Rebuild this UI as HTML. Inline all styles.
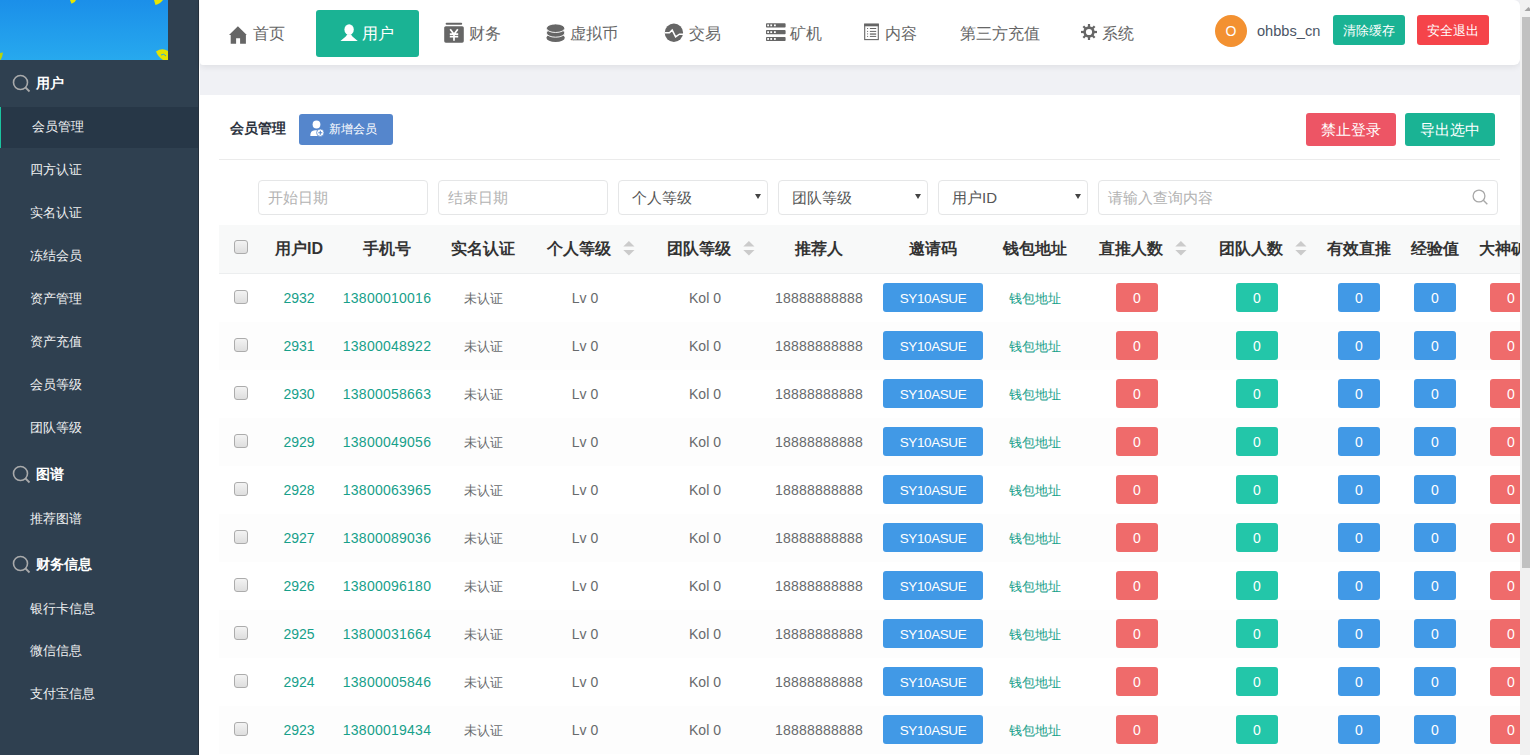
<!DOCTYPE html><html><head><meta charset="utf-8"><style>
*{box-sizing:border-box;margin:0;padding:0}
html,body{width:1530px;height:755px;overflow:hidden;background:#fff;font-family:"Liberation Sans",sans-serif;}
#side{position:absolute;left:0;top:0;width:199px;height:755px;background:#2f4050;}
#sideline{position:absolute;left:198px;top:0;width:1px;height:755px;background:#26313d}
#logo{position:absolute;left:0;top:0;width:168px;height:60px;background:linear-gradient(#1b8fe9,#27a9ee);overflow:hidden}
.sec{position:absolute;left:0;width:198px;height:20px;color:#fff;font-weight:bold;font-size:14px;line-height:20px}
.sec svg{position:absolute;left:12px;top:1px}
.sec span{position:absolute;left:36px;top:0}
.item{position:absolute;left:30px;color:#f0f1f2;font-size:13px;line-height:16px;white-space:nowrap}
#act{position:absolute;left:0;top:107px;width:198px;height:41px;background:#273747;border-left:1px solid #1bc4a0}
#gray{position:absolute;left:200px;top:0;width:1320px;height:95px;background:#f0f1f5}
#hdr{position:absolute;left:200px;top:0;width:1320px;height:65px;background:#fff;border-radius:0 6px 6px 3px;box-shadow:0 2px 6px rgba(0,0,0,.075)}
.nt{position:absolute;top:24px;color:#666;font-size:16px;line-height:20px;white-space:nowrap}
.ic{position:absolute}
#card{position:absolute;left:200px;top:95px;width:1320px;height:660px;background:#fff;overflow:hidden}
.btn{position:absolute;color:#fff;text-align:center;border-radius:3px;white-space:nowrap}
.inp{position:absolute;top:85px;height:35px;border:1px solid #e5e6e7;border-radius:4px;font-size:15px;line-height:33px;padding-left:9px;color:#b3b3b3;white-space:nowrap}
.sel{color:#555;padding-left:13px}
.arr{position:absolute;right:6px;top:13px}
#sb{position:absolute;left:1520px;top:0;width:10px;height:755px;background:#f1f1f1}
#thumb{position:absolute;left:1522px;top:17px;width:8px;height:551px;background:#c1c1c1}
.th{position:absolute;top:0;height:48px;line-height:48px;font-weight:bold;font-size:16px;color:#333;white-space:nowrap;text-align:center}
.td{position:absolute;height:48px;line-height:48px;font-size:14px;color:#676a6c;white-space:nowrap;text-align:center}
.g{color:#17a08a}
.bdg{display:inline-block;vertical-align:middle;height:29px;line-height:31px;color:#fff;border-radius:3px;font-size:14px;margin-top:-4px}
.cb{display:inline-block;vertical-align:middle;width:14px;height:14px;border:1px solid #acacac;border-radius:3px;background:linear-gradient(#f3f3f3,#dedede);margin-top:-5px;margin-left:-1px}
</style></head><body>
<div id="side"></div><div id="sideline"></div><div id="logo"><svg width="168" height="60" viewBox="0 0 168 60" style="position:absolute;left:0;top:0"><path d="M70 0 L76 0 Q75 3 71.5 3.8 Z" fill="#e8e600"/><path d="M154 0 L163 0 Q160 4 155.5 5 Z" fill="#e8e600"/><path d="M0 53 L3 52.5 Q2.5 57 0.5 60 L0 60 Z" fill="#b6d40a"/><path d="M156 51.5 Q162 47.5 168 51 L168 60 L163 60 Q158 57 156 51.5 Z" fill="#e3e400"/><path d="M161 55 Q164 53 166 56" stroke="#26a5ec" stroke-width="1" fill="none"/></svg></div>
<div id="act"></div>
<div class="sec" style="top:73px"><svg width="20" height="20" viewBox="0 0 20 20"><circle cx="8.5" cy="8.5" r="7" fill="none" stroke="#a9aaab" stroke-width="1.6"/><path d="M13.5 13.5L17.5 17.5" stroke="#a9aaab" stroke-width="1.8"/></svg><span>用户</span></div>
<div class="sec" style="top:464px"><svg width="20" height="20" viewBox="0 0 20 20"><circle cx="8.5" cy="8.5" r="7" fill="none" stroke="#a9aaab" stroke-width="1.6"/><path d="M13.5 13.5L17.5 17.5" stroke="#a9aaab" stroke-width="1.8"/></svg><span>图谱</span></div>
<div class="sec" style="top:554px"><svg width="20" height="20" viewBox="0 0 20 20"><circle cx="8.5" cy="8.5" r="7" fill="none" stroke="#a9aaab" stroke-width="1.6"/><path d="M13.5 13.5L17.5 17.5" stroke="#a9aaab" stroke-width="1.8"/></svg><span>财务信息</span></div>
<div class="item" style="top:119px;left:32px">会员管理</div>
<div class="item" style="top:162px;left:30px">四方认证</div>
<div class="item" style="top:205px;left:30px">实名认证</div>
<div class="item" style="top:248px;left:30px">冻结会员</div>
<div class="item" style="top:291px;left:30px">资产管理</div>
<div class="item" style="top:334px;left:30px">资产充值</div>
<div class="item" style="top:377px;left:30px">会员等级</div>
<div class="item" style="top:420px;left:30px">团队等级</div>
<div class="item" style="top:511px;left:30px">推荐图谱</div>
<div class="item" style="top:601px;left:30px">银行卡信息</div>
<div class="item" style="top:643px;left:30px">微信信息</div>
<div class="item" style="top:686px;left:30px">支付宝信息</div>
<div id="gray"></div><div id="hdr"></div>
<div class="btn" style="left:316px;top:10px;width:103px;height:47px;background:#1ab394;border-radius:3px"></div>
<div class="nt" style="left:253px;color:#666">首页</div>
<div class="nt" style="left:362px;color:#fff">用户</div>
<div class="nt" style="left:469px;color:#666">财务</div>
<div class="nt" style="left:570px;color:#666">虚拟币</div>
<div class="nt" style="left:689px;color:#666">交易</div>
<div class="nt" style="left:790px;color:#666">矿机</div>
<div class="nt" style="left:885px;color:#666">内容</div>
<div class="nt" style="left:960px;color:#666">第三方充值</div>
<div class="nt" style="left:1102px;color:#666">系统</div>
<svg style="position:absolute;left:229px;top:26px" width="18" height="18" viewBox="0 0 18 18"><path d="M8.9 0.2 L17.8 8.9 L16.9 8.9 L16.9 17.8 L11.1 17.8 L11.1 12.2 L7.1 12.2 L7.1 17.8 L1.7 17.8 L1.7 8.9 L0 8.9 Z" fill="#666"/></svg>
<svg style="position:absolute;left:340px;top:24px" width="18" height="18" viewBox="0 0 18 18"><ellipse cx="9.1" cy="5.5" rx="4.7" ry="5.3" fill="#fff"/><path d="M0.4 16.9 L4.6 13.4 Q6.6 12 7.1 10.2 H11.1 Q11.6 12 13.6 13.4 L17.8 16.9 Z" fill="#fff"/></svg>
<svg style="position:absolute;left:444px;top:22px" width="20" height="21" viewBox="0 0 20 21"><rect x="1.6" y="0.8" width="16.6" height="2" rx="1" fill="#666"/><rect x="0.2" y="4.2" width="19.6" height="16.5" rx="1.6" fill="#666"/><path d="M6.2 7.3 L10 12.3 L13.8 7.3 M5.8 12.2 H14.2 M5.8 14.6 H14.2 M10 12.3 V18.8" stroke="#fff" stroke-width="1.7" fill="none"/></svg>
<svg style="position:absolute;left:546px;top:23px" width="20" height="20" viewBox="0 0 20 20"><ellipse cx="9.6" cy="14.7" rx="9.2" ry="4.3" fill="#666"/><ellipse cx="9.6" cy="9.9" rx="9.2" ry="4.3" fill="#666" stroke="#fff" stroke-width="0.9"/><ellipse cx="9.6" cy="5.2" rx="9.2" ry="4.3" fill="#666" stroke="#fff" stroke-width="0.9"/></svg>
<svg style="position:absolute;left:664px;top:23px" width="20" height="20" viewBox="0 0 20 20"><circle cx="9.9" cy="9.8" r="9.2" fill="#666"/><path d="M0.5 9.8 H5.4 L8.2 7.1 L11.6 13.8 L15.4 11.2 H19.5" stroke="#fff" stroke-width="1.5" fill="none" stroke-linejoin="miter"/></svg>
<svg style="position:absolute;left:766px;top:23px" width="20" height="18" viewBox="0 0 20 18"><rect x="0" y="0.2" width="19.6" height="4.3" rx="0.8" fill="#666"/><rect x="0" y="7.1" width="19.6" height="4.1" rx="0.8" fill="#666"/><rect x="0" y="13.9" width="19.6" height="4.1" rx="0.8" fill="#666"/><rect x="1.2000000000000002" y="1.4500000000000002" width="1.8" height="1.8" fill="#fff"/><rect x="4.3" y="1.4500000000000002" width="1.8" height="1.8" fill="#fff"/><rect x="8.0" y="1.4500000000000002" width="1.8" height="1.8" fill="#fff"/><rect x="1.2000000000000002" y="8.25" width="1.8" height="1.8" fill="#fff"/><rect x="4.3" y="8.25" width="1.8" height="1.8" fill="#fff"/><rect x="8.0" y="8.25" width="1.8" height="1.8" fill="#fff"/><rect x="1.2000000000000002" y="15.049999999999999" width="1.8" height="1.8" fill="#fff"/><rect x="4.3" y="15.049999999999999" width="1.8" height="1.8" fill="#fff"/><rect x="8.0" y="15.049999999999999" width="1.8" height="1.8" fill="#fff"/></svg>
<svg style="position:absolute;left:864px;top:23px" width="16" height="18" viewBox="0 0 16 18"><rect x="0.7" y="1.2" width="13.6" height="15.4" fill="none" stroke="#666" stroke-width="1.1"/><rect x="0.2" y="0.7" width="14.6" height="2.6" fill="#666"/><rect x="3.1" y="5.0" width="1" height="1" fill="#666"/><rect x="5.9" y="5.0" width="6.3" height="1" fill="#666"/><rect x="3.1" y="7.9" width="1" height="1" fill="#666"/><rect x="5.9" y="7.9" width="6.3" height="1" fill="#666"/><rect x="3.1" y="10.4" width="1" height="1" fill="#666"/><rect x="5.9" y="10.4" width="6.3" height="1.3" fill="#666"/><rect x="3.1" y="12.9" width="1" height="1" fill="#666"/><rect x="5.9" y="12.9" width="6.3" height="1" fill="#666"/></svg>
<svg style="position:absolute;left:1081px;top:24px" width="16" height="16" viewBox="0 0 16 16"><circle cx="8" cy="8" r="5.7" fill="#666"/><rect x="6.9" y="0" width="2.2" height="16" fill="#666" transform="rotate(0 8 8)"/><rect x="6.9" y="0" width="2.2" height="16" fill="#666" transform="rotate(45 8 8)"/><rect x="6.9" y="0" width="2.2" height="16" fill="#666" transform="rotate(90 8 8)"/><rect x="6.9" y="0" width="2.2" height="16" fill="#666" transform="rotate(135 8 8)"/><circle cx="8" cy="8" r="3.1" fill="#fff"/></svg>
<div class="abs" style="position:absolute;left:1215px;top:15px;width:32px;height:32px;border-radius:50%;background:#f39131;color:#fff;font-size:14px;line-height:32px;text-align:center">O</div>
<div style="position:absolute;left:1257px;top:21px;font-size:14.6px;line-height:20px;color:#4b5565">ohbbs_cn</div>
<div class="btn" style="left:1333px;top:15px;width:72px;height:30px;line-height:31px;font-size:13px;background:#1ab394">清除缓存</div>
<div class="btn" style="left:1417px;top:15px;width:72px;height:30px;line-height:31px;font-size:13px;background:#f5444a">安全退出</div>
<div id="card">
<div style="position:absolute;left:30px;top:24px;font-size:14px;font-weight:bold;color:#2d3440;line-height:18px">会员管理</div>
<div class="btn" style="left:99px;top:19px;width:94px;height:31px;line-height:31px;font-size:12px;background:#5586cc;padding-left:14px">新增会员</div>
<svg style="position:absolute;left:109px;top:25px" width="16" height="18" viewBox="0 0 16 18"><circle cx="7.5" cy="4.5" r="3.9" fill="#fff"/><path d="M1.3 16 Q1 10.5 6 10.2 L8.5 10.2 Q9.5 10.5 9 12 L9 16 Z" fill="#fff"/><circle cx="11.3" cy="12.7" r="3.7" fill="#fff" stroke="#5586cc" stroke-width="0.8"/><path d="M9.3 12.7 H13.3 M11.3 10.7 V14.7" stroke="#5586cc" stroke-width="1.1"/></svg>
<div class="btn" style="left:1106px;top:18px;width:90px;height:33px;line-height:34px;font-size:15px;background:#ed5565">禁止登录</div>
<div class="btn" style="left:1205px;top:18px;width:90px;height:33px;line-height:34px;font-size:15px;background:#1ab394">导出选中</div>
<div style="position:absolute;left:19px;top:64px;width:1281px;height:1px;background:#ebebeb"></div>
<div class="inp" style="left:58px;width:170px">开始日期</div>
<div class="inp" style="left:238px;width:170px">结束日期</div>
<div class="inp sel" style="left:418px;width:150px">个人等级<svg class="arr" width="6" height="5" viewBox="0 0 6 5"><path d="M0 0 H6 L3 5 Z" fill="#444"/></svg></div>
<div class="inp sel" style="left:578px;width:150px">团队等级<svg class="arr" width="6" height="5" viewBox="0 0 6 5"><path d="M0 0 H6 L3 5 Z" fill="#444"/></svg></div>
<div class="inp sel" style="left:738px;width:150px">用户ID<svg class="arr" width="6" height="5" viewBox="0 0 6 5"><path d="M0 0 H6 L3 5 Z" fill="#444"/></svg></div>
<div class="inp" style="left:898px;width:400px">请输入查询内容<svg style="position:absolute;left:373px;top:8px" width="17" height="17" viewBox="0 0 17 17"><circle cx="7" cy="7" r="5.9" fill="none" stroke="#a8a8a8" stroke-width="1.3"/><path d="M11.3 11.3 L15.3 15.3" stroke="#a8a8a8" stroke-width="1.4"/></svg></div>
<div style="position:absolute;left:19px;top:130px;width:1310px;height:49px;background:#f8f9f9;border-bottom:1px solid #eceeef"></div>
<div class="th" style="top:130px;left:19px;width:44px"><span class="cb"></span></div>
<div class="th" style="top:130px;left:63px;width:72px">用户ID</div>
<div class="th" style="top:130px;left:135px;width:104px">手机号</div>
<div class="th" style="top:130px;left:239px;width:88px">实名认证</div>
<div class="th" style="top:130px;left:327px;width:116px;padding-left:12px">个人等级<svg style="display:inline-block;vertical-align:top;margin-top:16px;margin-left:12px" width="12" height="15" viewBox="0 0 12 15"><path d="M0.3 5.6 L5.9 0.1 L11.5 5.6 Z M0.3 9 L11.5 9 L5.9 14.6 Z" fill="#cbcbcb"/></svg></div>
<div class="th" style="top:130px;left:443px;width:124px;padding-left:12px">团队等级<svg style="display:inline-block;vertical-align:top;margin-top:16px;margin-left:12px" width="12" height="15" viewBox="0 0 12 15"><path d="M0.3 5.6 L5.9 0.1 L11.5 5.6 Z M0.3 9 L11.5 9 L5.9 14.6 Z" fill="#cbcbcb"/></svg></div>
<div class="th" style="top:130px;left:567px;width:104px">推荐人</div>
<div class="th" style="top:130px;left:671px;width:124px">邀请码</div>
<div class="th" style="top:130px;left:795px;width:80px">钱包地址</div>
<div class="th" style="top:130px;left:875px;width:124px;padding-left:12px">直推人数<svg style="display:inline-block;vertical-align:top;margin-top:16px;margin-left:12px" width="12" height="15" viewBox="0 0 12 15"><path d="M0.3 5.6 L5.9 0.1 L11.5 5.6 Z M0.3 9 L11.5 9 L5.9 14.6 Z" fill="#cbcbcb"/></svg></div>
<div class="th" style="top:130px;left:999px;width:116px;padding-left:12px">团队人数<svg style="display:inline-block;vertical-align:top;margin-top:16px;margin-left:12px" width="12" height="15" viewBox="0 0 12 15"><path d="M0.3 5.6 L5.9 0.1 L11.5 5.6 Z M0.3 9 L11.5 9 L5.9 14.6 Z" fill="#cbcbcb"/></svg></div>
<div class="th" style="top:130px;left:1115px;width:88px">有效直推</div>
<div class="th" style="top:130px;left:1203px;width:64px">经验值</div>
<div class="th" style="top:130px;left:1267px;width:88px">大神矿机</div>
<div class="td" style="top:179px;left:19px;width:44px"><span class="cb"></span></div>
<div class="td" style="top:179px;left:63px;width:72px"><span class="g">2932</span></div>
<div class="td" style="top:179px;left:135px;width:104px"><span class="g" style="letter-spacing:0.25px">13800010016</span></div>
<div class="td" style="top:179px;left:239px;width:88px"><span style="font-size:13px">未认证</span></div>
<div class="td" style="top:179px;left:327px;width:116px">Lv 0</div>
<div class="td" style="top:179px;left:443px;width:124px">Kol 0</div>
<div class="td" style="top:179px;left:567px;width:104px"><span style="letter-spacing:0.2px">18888888888</span></div>
<div class="td" style="top:179px;left:671px;width:124px"><span class="bdg" style="width:100px;background:#4199e6;font-size:13.5px;letter-spacing:-0.4px">SY10ASUE</span></div>
<div class="td" style="top:179px;left:795px;width:80px"><span class="g" style="font-size:13px">钱包地址</span></div>
<div class="td" style="top:179px;left:875px;width:124px"><span class="bdg" style="width:42px;background:#ef6b6b">0</span></div>
<div class="td" style="top:179px;left:999px;width:116px"><span class="bdg" style="width:42px;background:#23c6a9">0</span></div>
<div class="td" style="top:179px;left:1115px;width:88px"><span class="bdg" style="width:42px;background:#4199e6">0</span></div>
<div class="td" style="top:179px;left:1203px;width:64px"><span class="bdg" style="width:42px;background:#4199e6">0</span></div>
<div class="td" style="top:179px;left:1267px;width:88px"><span class="bdg" style="width:42px;background:#ef6b6b">0</span></div>
<div style="position:absolute;left:19px;top:227px;width:1310px;height:48px;background:#fdfdfd"></div>
<div class="td" style="top:227px;left:19px;width:44px"><span class="cb"></span></div>
<div class="td" style="top:227px;left:63px;width:72px"><span class="g">2931</span></div>
<div class="td" style="top:227px;left:135px;width:104px"><span class="g" style="letter-spacing:0.25px">13800048922</span></div>
<div class="td" style="top:227px;left:239px;width:88px"><span style="font-size:13px">未认证</span></div>
<div class="td" style="top:227px;left:327px;width:116px">Lv 0</div>
<div class="td" style="top:227px;left:443px;width:124px">Kol 0</div>
<div class="td" style="top:227px;left:567px;width:104px"><span style="letter-spacing:0.2px">18888888888</span></div>
<div class="td" style="top:227px;left:671px;width:124px"><span class="bdg" style="width:100px;background:#4199e6;font-size:13.5px;letter-spacing:-0.4px">SY10ASUE</span></div>
<div class="td" style="top:227px;left:795px;width:80px"><span class="g" style="font-size:13px">钱包地址</span></div>
<div class="td" style="top:227px;left:875px;width:124px"><span class="bdg" style="width:42px;background:#ef6b6b">0</span></div>
<div class="td" style="top:227px;left:999px;width:116px"><span class="bdg" style="width:42px;background:#23c6a9">0</span></div>
<div class="td" style="top:227px;left:1115px;width:88px"><span class="bdg" style="width:42px;background:#4199e6">0</span></div>
<div class="td" style="top:227px;left:1203px;width:64px"><span class="bdg" style="width:42px;background:#4199e6">0</span></div>
<div class="td" style="top:227px;left:1267px;width:88px"><span class="bdg" style="width:42px;background:#ef6b6b">0</span></div>
<div class="td" style="top:275px;left:19px;width:44px"><span class="cb"></span></div>
<div class="td" style="top:275px;left:63px;width:72px"><span class="g">2930</span></div>
<div class="td" style="top:275px;left:135px;width:104px"><span class="g" style="letter-spacing:0.25px">13800058663</span></div>
<div class="td" style="top:275px;left:239px;width:88px"><span style="font-size:13px">未认证</span></div>
<div class="td" style="top:275px;left:327px;width:116px">Lv 0</div>
<div class="td" style="top:275px;left:443px;width:124px">Kol 0</div>
<div class="td" style="top:275px;left:567px;width:104px"><span style="letter-spacing:0.2px">18888888888</span></div>
<div class="td" style="top:275px;left:671px;width:124px"><span class="bdg" style="width:100px;background:#4199e6;font-size:13.5px;letter-spacing:-0.4px">SY10ASUE</span></div>
<div class="td" style="top:275px;left:795px;width:80px"><span class="g" style="font-size:13px">钱包地址</span></div>
<div class="td" style="top:275px;left:875px;width:124px"><span class="bdg" style="width:42px;background:#ef6b6b">0</span></div>
<div class="td" style="top:275px;left:999px;width:116px"><span class="bdg" style="width:42px;background:#23c6a9">0</span></div>
<div class="td" style="top:275px;left:1115px;width:88px"><span class="bdg" style="width:42px;background:#4199e6">0</span></div>
<div class="td" style="top:275px;left:1203px;width:64px"><span class="bdg" style="width:42px;background:#4199e6">0</span></div>
<div class="td" style="top:275px;left:1267px;width:88px"><span class="bdg" style="width:42px;background:#ef6b6b">0</span></div>
<div style="position:absolute;left:19px;top:323px;width:1310px;height:48px;background:#fdfdfd"></div>
<div class="td" style="top:323px;left:19px;width:44px"><span class="cb"></span></div>
<div class="td" style="top:323px;left:63px;width:72px"><span class="g">2929</span></div>
<div class="td" style="top:323px;left:135px;width:104px"><span class="g" style="letter-spacing:0.25px">13800049056</span></div>
<div class="td" style="top:323px;left:239px;width:88px"><span style="font-size:13px">未认证</span></div>
<div class="td" style="top:323px;left:327px;width:116px">Lv 0</div>
<div class="td" style="top:323px;left:443px;width:124px">Kol 0</div>
<div class="td" style="top:323px;left:567px;width:104px"><span style="letter-spacing:0.2px">18888888888</span></div>
<div class="td" style="top:323px;left:671px;width:124px"><span class="bdg" style="width:100px;background:#4199e6;font-size:13.5px;letter-spacing:-0.4px">SY10ASUE</span></div>
<div class="td" style="top:323px;left:795px;width:80px"><span class="g" style="font-size:13px">钱包地址</span></div>
<div class="td" style="top:323px;left:875px;width:124px"><span class="bdg" style="width:42px;background:#ef6b6b">0</span></div>
<div class="td" style="top:323px;left:999px;width:116px"><span class="bdg" style="width:42px;background:#23c6a9">0</span></div>
<div class="td" style="top:323px;left:1115px;width:88px"><span class="bdg" style="width:42px;background:#4199e6">0</span></div>
<div class="td" style="top:323px;left:1203px;width:64px"><span class="bdg" style="width:42px;background:#4199e6">0</span></div>
<div class="td" style="top:323px;left:1267px;width:88px"><span class="bdg" style="width:42px;background:#ef6b6b">0</span></div>
<div class="td" style="top:371px;left:19px;width:44px"><span class="cb"></span></div>
<div class="td" style="top:371px;left:63px;width:72px"><span class="g">2928</span></div>
<div class="td" style="top:371px;left:135px;width:104px"><span class="g" style="letter-spacing:0.25px">13800063965</span></div>
<div class="td" style="top:371px;left:239px;width:88px"><span style="font-size:13px">未认证</span></div>
<div class="td" style="top:371px;left:327px;width:116px">Lv 0</div>
<div class="td" style="top:371px;left:443px;width:124px">Kol 0</div>
<div class="td" style="top:371px;left:567px;width:104px"><span style="letter-spacing:0.2px">18888888888</span></div>
<div class="td" style="top:371px;left:671px;width:124px"><span class="bdg" style="width:100px;background:#4199e6;font-size:13.5px;letter-spacing:-0.4px">SY10ASUE</span></div>
<div class="td" style="top:371px;left:795px;width:80px"><span class="g" style="font-size:13px">钱包地址</span></div>
<div class="td" style="top:371px;left:875px;width:124px"><span class="bdg" style="width:42px;background:#ef6b6b">0</span></div>
<div class="td" style="top:371px;left:999px;width:116px"><span class="bdg" style="width:42px;background:#23c6a9">0</span></div>
<div class="td" style="top:371px;left:1115px;width:88px"><span class="bdg" style="width:42px;background:#4199e6">0</span></div>
<div class="td" style="top:371px;left:1203px;width:64px"><span class="bdg" style="width:42px;background:#4199e6">0</span></div>
<div class="td" style="top:371px;left:1267px;width:88px"><span class="bdg" style="width:42px;background:#ef6b6b">0</span></div>
<div style="position:absolute;left:19px;top:419px;width:1310px;height:48px;background:#fdfdfd"></div>
<div class="td" style="top:419px;left:19px;width:44px"><span class="cb"></span></div>
<div class="td" style="top:419px;left:63px;width:72px"><span class="g">2927</span></div>
<div class="td" style="top:419px;left:135px;width:104px"><span class="g" style="letter-spacing:0.25px">13800089036</span></div>
<div class="td" style="top:419px;left:239px;width:88px"><span style="font-size:13px">未认证</span></div>
<div class="td" style="top:419px;left:327px;width:116px">Lv 0</div>
<div class="td" style="top:419px;left:443px;width:124px">Kol 0</div>
<div class="td" style="top:419px;left:567px;width:104px"><span style="letter-spacing:0.2px">18888888888</span></div>
<div class="td" style="top:419px;left:671px;width:124px"><span class="bdg" style="width:100px;background:#4199e6;font-size:13.5px;letter-spacing:-0.4px">SY10ASUE</span></div>
<div class="td" style="top:419px;left:795px;width:80px"><span class="g" style="font-size:13px">钱包地址</span></div>
<div class="td" style="top:419px;left:875px;width:124px"><span class="bdg" style="width:42px;background:#ef6b6b">0</span></div>
<div class="td" style="top:419px;left:999px;width:116px"><span class="bdg" style="width:42px;background:#23c6a9">0</span></div>
<div class="td" style="top:419px;left:1115px;width:88px"><span class="bdg" style="width:42px;background:#4199e6">0</span></div>
<div class="td" style="top:419px;left:1203px;width:64px"><span class="bdg" style="width:42px;background:#4199e6">0</span></div>
<div class="td" style="top:419px;left:1267px;width:88px"><span class="bdg" style="width:42px;background:#ef6b6b">0</span></div>
<div class="td" style="top:467px;left:19px;width:44px"><span class="cb"></span></div>
<div class="td" style="top:467px;left:63px;width:72px"><span class="g">2926</span></div>
<div class="td" style="top:467px;left:135px;width:104px"><span class="g" style="letter-spacing:0.25px">13800096180</span></div>
<div class="td" style="top:467px;left:239px;width:88px"><span style="font-size:13px">未认证</span></div>
<div class="td" style="top:467px;left:327px;width:116px">Lv 0</div>
<div class="td" style="top:467px;left:443px;width:124px">Kol 0</div>
<div class="td" style="top:467px;left:567px;width:104px"><span style="letter-spacing:0.2px">18888888888</span></div>
<div class="td" style="top:467px;left:671px;width:124px"><span class="bdg" style="width:100px;background:#4199e6;font-size:13.5px;letter-spacing:-0.4px">SY10ASUE</span></div>
<div class="td" style="top:467px;left:795px;width:80px"><span class="g" style="font-size:13px">钱包地址</span></div>
<div class="td" style="top:467px;left:875px;width:124px"><span class="bdg" style="width:42px;background:#ef6b6b">0</span></div>
<div class="td" style="top:467px;left:999px;width:116px"><span class="bdg" style="width:42px;background:#23c6a9">0</span></div>
<div class="td" style="top:467px;left:1115px;width:88px"><span class="bdg" style="width:42px;background:#4199e6">0</span></div>
<div class="td" style="top:467px;left:1203px;width:64px"><span class="bdg" style="width:42px;background:#4199e6">0</span></div>
<div class="td" style="top:467px;left:1267px;width:88px"><span class="bdg" style="width:42px;background:#ef6b6b">0</span></div>
<div style="position:absolute;left:19px;top:515px;width:1310px;height:48px;background:#fdfdfd"></div>
<div class="td" style="top:515px;left:19px;width:44px"><span class="cb"></span></div>
<div class="td" style="top:515px;left:63px;width:72px"><span class="g">2925</span></div>
<div class="td" style="top:515px;left:135px;width:104px"><span class="g" style="letter-spacing:0.25px">13800031664</span></div>
<div class="td" style="top:515px;left:239px;width:88px"><span style="font-size:13px">未认证</span></div>
<div class="td" style="top:515px;left:327px;width:116px">Lv 0</div>
<div class="td" style="top:515px;left:443px;width:124px">Kol 0</div>
<div class="td" style="top:515px;left:567px;width:104px"><span style="letter-spacing:0.2px">18888888888</span></div>
<div class="td" style="top:515px;left:671px;width:124px"><span class="bdg" style="width:100px;background:#4199e6;font-size:13.5px;letter-spacing:-0.4px">SY10ASUE</span></div>
<div class="td" style="top:515px;left:795px;width:80px"><span class="g" style="font-size:13px">钱包地址</span></div>
<div class="td" style="top:515px;left:875px;width:124px"><span class="bdg" style="width:42px;background:#ef6b6b">0</span></div>
<div class="td" style="top:515px;left:999px;width:116px"><span class="bdg" style="width:42px;background:#23c6a9">0</span></div>
<div class="td" style="top:515px;left:1115px;width:88px"><span class="bdg" style="width:42px;background:#4199e6">0</span></div>
<div class="td" style="top:515px;left:1203px;width:64px"><span class="bdg" style="width:42px;background:#4199e6">0</span></div>
<div class="td" style="top:515px;left:1267px;width:88px"><span class="bdg" style="width:42px;background:#ef6b6b">0</span></div>
<div class="td" style="top:563px;left:19px;width:44px"><span class="cb"></span></div>
<div class="td" style="top:563px;left:63px;width:72px"><span class="g">2924</span></div>
<div class="td" style="top:563px;left:135px;width:104px"><span class="g" style="letter-spacing:0.25px">13800005846</span></div>
<div class="td" style="top:563px;left:239px;width:88px"><span style="font-size:13px">未认证</span></div>
<div class="td" style="top:563px;left:327px;width:116px">Lv 0</div>
<div class="td" style="top:563px;left:443px;width:124px">Kol 0</div>
<div class="td" style="top:563px;left:567px;width:104px"><span style="letter-spacing:0.2px">18888888888</span></div>
<div class="td" style="top:563px;left:671px;width:124px"><span class="bdg" style="width:100px;background:#4199e6;font-size:13.5px;letter-spacing:-0.4px">SY10ASUE</span></div>
<div class="td" style="top:563px;left:795px;width:80px"><span class="g" style="font-size:13px">钱包地址</span></div>
<div class="td" style="top:563px;left:875px;width:124px"><span class="bdg" style="width:42px;background:#ef6b6b">0</span></div>
<div class="td" style="top:563px;left:999px;width:116px"><span class="bdg" style="width:42px;background:#23c6a9">0</span></div>
<div class="td" style="top:563px;left:1115px;width:88px"><span class="bdg" style="width:42px;background:#4199e6">0</span></div>
<div class="td" style="top:563px;left:1203px;width:64px"><span class="bdg" style="width:42px;background:#4199e6">0</span></div>
<div class="td" style="top:563px;left:1267px;width:88px"><span class="bdg" style="width:42px;background:#ef6b6b">0</span></div>
<div style="position:absolute;left:19px;top:611px;width:1310px;height:48px;background:#fdfdfd"></div>
<div class="td" style="top:611px;left:19px;width:44px"><span class="cb"></span></div>
<div class="td" style="top:611px;left:63px;width:72px"><span class="g">2923</span></div>
<div class="td" style="top:611px;left:135px;width:104px"><span class="g" style="letter-spacing:0.25px">13800019434</span></div>
<div class="td" style="top:611px;left:239px;width:88px"><span style="font-size:13px">未认证</span></div>
<div class="td" style="top:611px;left:327px;width:116px">Lv 0</div>
<div class="td" style="top:611px;left:443px;width:124px">Kol 0</div>
<div class="td" style="top:611px;left:567px;width:104px"><span style="letter-spacing:0.2px">18888888888</span></div>
<div class="td" style="top:611px;left:671px;width:124px"><span class="bdg" style="width:100px;background:#4199e6;font-size:13.5px;letter-spacing:-0.4px">SY10ASUE</span></div>
<div class="td" style="top:611px;left:795px;width:80px"><span class="g" style="font-size:13px">钱包地址</span></div>
<div class="td" style="top:611px;left:875px;width:124px"><span class="bdg" style="width:42px;background:#ef6b6b">0</span></div>
<div class="td" style="top:611px;left:999px;width:116px"><span class="bdg" style="width:42px;background:#23c6a9">0</span></div>
<div class="td" style="top:611px;left:1115px;width:88px"><span class="bdg" style="width:42px;background:#4199e6">0</span></div>
<div class="td" style="top:611px;left:1203px;width:64px"><span class="bdg" style="width:42px;background:#4199e6">0</span></div>
<div class="td" style="top:611px;left:1267px;width:88px"><span class="bdg" style="width:42px;background:#ef6b6b">0</span></div>
</div>
<div id="sb"></div><div id="thumb"></div><svg style="position:absolute;left:1524px;top:6px" width="6" height="6" viewBox="0 0 6 6"><path d="M0.5 5 L4.5 1 L8.5 5 Z" fill="#a3a3a3"/></svg>
</body></html>
